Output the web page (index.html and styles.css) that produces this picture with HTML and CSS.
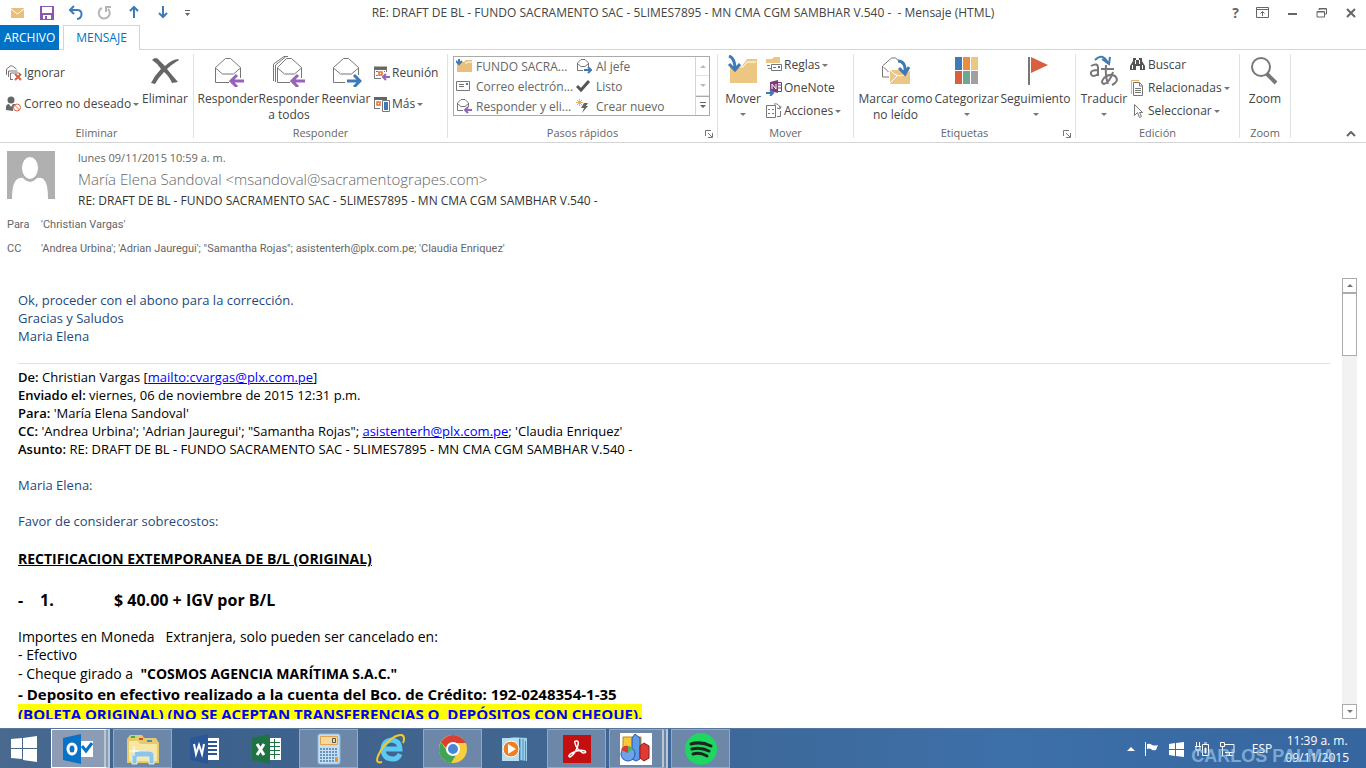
FILE: index.html
```html
<!DOCTYPE html>
<html lang="es">
<head>
    <meta charset="UTF-8">
    <meta name="viewport" content="width=device-width, initial-scale=1.0">
    <title>RE: DRAFT DE BL - Mensaje (HTML)</title>
    <link rel="stylesheet" href="styles.css">
</head>
<body>
    <header class="titlebar">
        <div class="quick">
            <button aria-label="Correo"><svg width="16" height="16"><path fill="#e8bf7d" d="M1 3h13v10H1z"/><path fill="none" stroke="#fff" d="M1 4l6.500 5L14 4"/></svg></button>
            <button aria-label="Guardar"><svg width="16" height="16"><path fill="#8a57b0" fill-rule="evenodd" d="M1 1h14v14H1zM3 2v6h10V2zM4 10v4h2v-3h2v3h4v-4z"/></svg></button>
            <button aria-label="Deshacer"><svg width="16" height="16" fill="none" stroke="#3f7ab8" stroke-width="2"><path d="M6 1L2 5l4 4M2 5h7c6 0 6 8 0 9"/></svg></button>
            <button aria-label="Rehacer"><svg width="16" height="16" fill="none" stroke="#b5b5b5" stroke-width="2"><path d="M5 3a5.500 5.500 0 1 0 6 1M9 7V2h5"/></svg></button>
            <button aria-label="Anterior"><svg width="16" height="16" fill="none" stroke="#3f7ab8" stroke-width="2"><path d="M8 13V2M4 6l4-4 4 4"/></svg></button>
            <button aria-label="Siguiente"><svg width="16" height="16" fill="none" stroke="#3f7ab8" stroke-width="2"><path d="M8 1v11M4 8l4 4 4-4"/></svg></button>
            <button class="more" aria-label="Personalizar"><svg width="7" height="8"><path fill="#666" d="M1 1h5v1H1zM1 4h5L3.500 7z"/></svg></button>
        </div>
        <h1>RE: DRAFT DE BL - FUNDO SACRAMENTO SAC - 5LIMES7895 - MN CMA CGM SAMBHAR V.540 -&nbsp; - Mensaje (HTML)</h1>
        <div class="window-buttons">
            <button class="help" aria-label="Ayuda">?</button>
            <button aria-label="Opciones"><svg width="14" height="12" fill="none" stroke="#666"><path d="M.5.500h12v10H.5zM1 2.500h11M6.500 9V4.500M4.500 6.500l2-2 2 2"/></svg></button>
            <button aria-label="Minimizar"><svg width="12" height="12"><path fill="#666" d="M1 6h9v2H1z"/></svg></button>
            <button aria-label="Restaurar"><svg width="12" height="12" fill="none" stroke="#666"><path d="M3 3V1.500h7.500V7H9M1 4.500h7.500V10H1zM3 2h7M1 5h7"/></svg></button>
            <button aria-label="Cerrar"><svg width="12" height="12" stroke="#666" stroke-width="2"><path d="M2 2l8 8M10 2l-8 8"/></svg></button>
        </div>
    </header>

    <nav class="tabs">
        <button class="file">ARCHIVO</button>
        <button class="active">MENSAJE</button>
    </nav>

    <section class="ribbon">
        <div class="group eliminar">
            <div class="tools">
                <div class="col two">
                    <button class="small"><svg width="16" height="16" fill="none" stroke="#777"><path d="M.5 10V4l4-3h2l4 3M2.500 12V6h9M4.500 14V8h9v2M4 14.500h3"/><path stroke="#d9603f" stroke-width="2" d="M9 9l6 6M15 9l-6 6"/></svg>Ignorar</button>
                    <button class="small"><svg width="16" height="16"><circle cx="5" cy="4" r="3.500" fill="#666"/><path fill="#666" d="M0 14V10q1-2 3-2l2 3 2-3h3q-4 3-3 7z"/><circle cx="11" cy="11.500" r="3.500" fill="#fff" stroke="#d9603f"/><path stroke="#d9603f" d="M8.500 9l5 5"/></svg>Correo no deseado<i class="arrow"></i></button>
                </div>
                <button class="big"><svg width="32" height="32"><path fill="#666" d="M3 5Q7 1 10 5l6 6Q22 5 29 4l1 1Q22 10 18 14q4 5 11 13l-6 1q-3-7-8-11-5 5-9 12l-4-1Q6 20 12 14 8 8 3 5z"/></svg>Eliminar</button>
            </div>
            <h2>Eliminar</h2>
        </div>

        <div class="group responder">
            <div class="tools">
                <button class="big"><svg width="32" height="32" fill="none" stroke="#777"><path d="M17 27.500H3.500v-15l10-9h5l10 9V23M3.500 13l7 6h11l7-6"/><path stroke="#9563b8" stroke-width="3" d="M32 26H19M25 20l-6 6 6 6"/></svg>Responder</button>
                <button class="big"><svg width="32" height="32" fill="none" stroke="#777"><path d="M.5 26V9L11 1.500h4M17 27.500H4.500v-15l9-9h5l10 9V23M4.500 13l7 6h10l7-6M2.500 27V10l10-8"/><path stroke="#9563b8" stroke-width="3" d="M32 26H19M25 20l-6 6 6 6"/></svg>Responder a todos</button>
                <button class="big"><svg width="32" height="32" fill="none" stroke="#777"><path d="M15 27.500H3.500v-15l10-9h5l10 9V20M3.500 13l7 6h11l7-6"/><path stroke="#3f7ab8" stroke-width="3" d="M17 26h13M24 20l6 6-6 6"/></svg>Reenviar</button>
                <div class="col two">
                    <button class="small"><svg width="16" height="16" fill="none" stroke="#777"><path d="M.5 13V4.500h12V7M0 13.500h7M2 6.500h2M2 10.500h2M10.500 6v1"/><path stroke="#666" stroke-width="3" d="M0 3h13"/><path stroke="#e07030" stroke-width="1.500" d="M5 7h3v3H5z"/><path stroke="#9563b8" stroke-width="2" d="M16 12h-6M12 9l-3 3 3 3"/></svg>Reunión</button>
                    <button class="small"><svg width="16" height="16" fill="none" stroke="#777"><path d="M.5 12.500V3M0 12.500h6"/><path stroke="#666" stroke-width="3" d="M0 2.500h13"/><path stroke="#e07030" stroke-width="1.500" d="M3 6h3v3H3z"/><path fill="#fff" d="M8.500 4.500h7v11h-7z"/><path fill="#3f7ab8" stroke="none" d="M10 6h4v8h-4z"/></svg>Más<i class="arrow"></i></button>
                </div>
            </div>
            <h2>Responder</h2>
        </div>

        <div class="group pasos">
            <div class="gallery">
                <div class="steps">
                    <button><svg width="16" height="16"><path fill="#e8bf7d" d="M1 3h7l2-2h6v12H1z"/><path fill="none" stroke="#fff" d="M9 4h2l1-1h4"/><path fill="none" stroke="#3f7ab8" stroke-width="2" d="M3 0v4M0 2l3 3 3-3"/></svg><span>FUNDO SACRA...</span></button>
                    <button><svg width="16" height="16" fill="none" stroke="#777"><path d="M7 11.500H1.500V4L5 .5h4L12.500 4v4M1.500 4.500L5 7.500h4l3.500-3"/><path stroke="#3f7ab8" stroke-width="2" d="M8 11h7M12 8l3 3-3 3"/></svg><span>Al jefe</span></button>
                    <button><svg width="16" height="16" fill="none" stroke="#777"><path d="M.5 2.500h13v9H.5zM3 5.500h5M3 7.500h5"/><path stroke="#3f7ab8" stroke-width="2" d="M10 5h2"/></svg><span>Correo electrón...</span></button>
                    <button><svg width="16" height="16" fill="none" stroke="#555" stroke-width="3"><path d="M1 7l4 4 8-9"/></svg><span>Listo</span></button>
                    <button><svg width="16" height="16" fill="none" stroke="#777"><path d="M7 11.500H1.500V4L5 .5h4L12.500 4v4M1.500 4.500L5 7.500h4l3.500-3"/><path stroke="#9563b8" stroke-width="2" d="M16 11h-6M12 8l-3 3 3 3"/></svg><span>Responder y eli...</span></button>
                    <button><svg width="16" height="16"><path stroke="#e8b06a" d="M3.500 0v7M0 3.500h7M1 1l5 5M6 1L1 6"/><path fill="#666" d="M8 4h4l-2 3h2l-6 7 2-5H5z"/></svg><span>Crear nuevo</span></button>
                </div>
                <div class="spin">
                    <button aria-label="Subir"><i class="arrow up pale"></i></button>
                    <button aria-label="Bajar"><i class="arrow pale"></i></button>
                    <button class="last" aria-label="Más pasos"><svg width="8" height="8"><path fill="#666" d="M1 0h6v1H1zM1 3h6L4 6z"/></svg></button>
                </div>
            </div>
            <h2>Pasos rápidos</h2>
            <button class="launcher" aria-label="Administrar pasos"><svg width="8" height="8" fill="none" stroke="#777"><path d="M.5 6V.5H6M3 3l4 4M7.500 3v4.500H3"/></svg></button>
        </div>

        <div class="group mover">
            <div class="tools">
                <button class="big"><svg width="32" height="32"><path fill="#ecc682" d="M3 11h12l5-7h10v24H3z"/><path fill="none" stroke="#fff" d="M10 12h6l4-5h9"/><path fill="none" stroke="#fff" stroke-width="5" d="M2 1q6 2 6 12"/><path fill="none" stroke="#3f7ab8" stroke-width="3" d="M2 1q6 2 6 13M2 9l6 6 5-6"/></svg>Mover<i class="arrow"></i></button>
                <div class="col three">
                    <button class="small"><svg width="16" height="16"><path fill="#ecc682" d="M0 2h6l2-2h6v6H0z"/><path fill="#fff" stroke="#777" d="M5.500 7.500h10v6h-10z"/><path stroke="#777" d="M1 8.500h3M2 11.500h3M7 10.500h3"/><path fill="#3f7ab8" d="M12 9h2v2h-2z"/></svg>Reglas<i class="arrow"></i></button>
                    <button class="small"><svg width="16" height="16"><path fill="#80397b" d="M4 2l8-2v13l-8-2z"/><path fill="none" stroke="#80397b" d="M12 2.500h3.500v9H12M12 5h3M12 8h3"/><path fill="none" stroke="#fff" d="M6 9V4l4 5V4"/><path fill="none" stroke="#3f7ab8" stroke-width="2" d="M0 13h6M4 10l3 3-3 3"/></svg>OneNote</button>
                    <button class="small"><svg width="16" height="16" fill="none" stroke="#777"><path d="M.5 2.500h9v12h-9zM2 6.500h2M6 6.500h2M2 10.500h2M6 10.500h2M8 1q5-1 6 4M11 5l3 1 1-3M11 13.500h3.500V8"/></svg>Acciones<i class="arrow"></i></button>
                </div>
            </div>
            <h2>Mover</h2>
        </div>

        <div class="group etiquetas">
            <div class="tools">
                <button class="big"><svg width="32" height="32"><path fill="#fff" stroke="#777" d="M9 22H2.500V11l9-8h4l9 8v5M3.500 12l5 5"/><path fill="#ecc682" d="M10 15h20v14H10z"/><path fill="none" stroke="#fff" d="M10 15q10 12 20 0M10 28l7-7"/><path fill="none" stroke="#3f7ab8" stroke-width="3" d="M18 6q8 0 7 12M19 13l6 6 4-7"/></svg>Marcar como no leído</button>
                <button class="big"><svg width="32" height="32"><path fill="#3f7ab8" d="M4 2h7v13H4z"/><path fill="#e88e43" d="M12 2h7v13h-7z"/><path fill="#ecc682" d="M20 2h7v13h-7z"/><path fill="#d9603f" d="M4 16h7v13H4z"/><path fill="#72a594" d="M12 16h7v13h-7z"/><path fill="#a0a0a0" d="M20 16h7v13h-7z"/></svg>Categorizar<i class="arrow"></i></button>
                <button class="big"><svg width="32" height="32"><path fill="#777" d="M8 2h2v28H8z"/><path fill="#d9603f" d="M11 2l17 8-17 8z"/></svg>Seguimiento<i class="arrow"></i></button>
            </div>
            <h2>Etiquetas</h2>
            <button class="launcher" aria-label="Opciones de etiquetas"><svg width="8" height="8" fill="none" stroke="#777"><path d="M.5 6V.5H6M3 3l4 4M7.500 3v4.500H3"/></svg></button>
        </div>

        <div class="group edicion">
            <div class="tools">
                <button class="big"><svg width="32" height="32" fill="none" stroke="#777" stroke-width="2"><path d="M3 11q7-4 7 2v8M10 15q-8 0-7 4t7 0M13 14h13M18 10q-1 11 2 19M25 17q-3 10-9 12-4-1 0-6 5-5 11-2 5 5-3 9"/><path stroke="#3f7ab8" d="M7 5q7-8 13 3M14 4l7 5 1-7"/></svg>Traducir<i class="arrow"></i></button>
                <div class="col three">
                    <button class="small"><svg width="16" height="16"><path fill="#555" d="M3 1h3v2h3V1h3v3l3 5v4h-5V9H6v4H0V9l3-5z"/><path stroke="#fff" d="M2.500 8v4M12.500 8v4M5.500 3v4M9.500 3v4"/></svg>Buscar</button>
                    <button class="small"><svg width="16" height="16" fill="none" stroke="#777"><path stroke="#e8b06a" d="M1.500 14V.5H9"/><path d="M3.500 2.500h6l3 3v10h-9zM9.500 3v3h3M5 8.500h6M5 10.500h6M5 12.500h6"/></svg>Relacionadas<i class="arrow"></i></button>
                    <button class="small"><svg width="16" height="16" fill="none" stroke="#777"><path d="M4.500 1.500v11l3-3 2 5 2-1-2-4h3z"/></svg>Seleccionar<i class="arrow"></i></button>
                </div>
            </div>
            <h2>Edición</h2>
        </div>

        <div class="group zoom">
            <div class="tools">
                <button class="big"><svg width="32" height="32" fill="none" stroke="#777"><circle cx="12" cy="12" r="9" stroke-width="2"/><path stroke-width="4" d="M18 19l9 9"/></svg>Zoom</button>
            </div>
            <h2>Zoom</h2>
        </div>
        <button class="collapse" aria-label="Contraer la cinta"><svg width="10" height="6" fill="none" stroke="#666" stroke-width="2"><path d="M1 5l4-4 4 4"/></svg></button>
    </section>

    <section class="head">
        <div class="sender">
            <svg width="48" height="48"><path fill="#b0b0b0" d="M0 0h48v48H0z"/><ellipse cx="23" cy="17" rx="8" ry="11" fill="#fff"/><path fill="#fff" d="M5 48q0-20 8-21 3-1 4 1 6 6 12 0 2-2 5-1 7 1 7 21z"/></svg>
            <div>
                <p class="date">lunes 09/11/2015 10:59 a. m.</p>
                <p class="from">María Elena Sandoval &lt;msandoval@sacramentograpes.com&gt;</p>
                <p class="subject">RE: DRAFT DE BL - FUNDO SACRAMENTO SAC - 5LIMES7895 - MN CMA CGM SAMBHAR V.540 -</p>
            </div>
        </div>
        <dl class="people">
            <dt>Para</dt>
            <dd>'Christian Vargas'</dd>
            <dt>CC</dt>
            <dd>'Andrea Urbina'; 'Adrian Jauregui'; "Samantha Rojas"; asistenterh@plx.com.pe; 'Claudia Enriquez'</dd>
        </dl>
    </section>

    <main class="reader">
        <article class="mail">
            <div class="blue">
                <p>Ok, proceder con el abono para la corrección.</p>
                <p>Gracias y Saludos</p>
                <p>Maria Elena</p>
            </div>
            <div class="quoted">
                <p><b>De:</b> Christian Vargas [<a href="mailto:cvargas@plx.com.pe">mailto:cvargas@plx.com.pe</a>]</p>
                <p><b>Enviado el:</b> viernes, 06 de noviembre de 2015 12:31 p.m.</p>
                <p><b>Para:</b> 'María Elena Sandoval'</p>
                <p><b>CC:</b> 'Andrea Urbina'; 'Adrian Jauregui'; "Samantha Rojas"; <a href="mailto:asistenterh@plx.com.pe">asistenterh@plx.com.pe</a>; 'Claudia Enriquez'</p>
                <p><b>Asunto:</b> RE: DRAFT DE BL - FUNDO SACRAMENTO SAC - 5LIMES7895 - MN CMA CGM SAMBHAR V.540 -</p>
            </div>
            <div class="blue spaced">
                <p>Maria Elena:</p>
                <p>Favor de considerar sobrecostos:</p>
            </div>
            <div class="costs">
                <h3>RECTIFICACION EXTEMPORANEA DE B/L (ORIGINAL)</h3>
                <p class="amount"><span>-</span><span>1.</span><span>$ 40.00 + IGV por B/L</span></p>
                <p>Importes en Moneda &nbsp; Extranjera, solo pueden ser cancelado en:</p>
                <p>- Efectivo</p>
                <p class="tall">- Cheque girado a &nbsp;<b>"COSMOS AGENCIA MARÍTIMA S.A.C."</b></p>
                <p class="tall strong">- Deposito en efectivo realizado a la cuenta del Bco. de Crédito: 192-0248354-1-35</p>
                <p class="tall"><mark>(BOLETA ORIGINAL) (NO SE ACEPTAN TRANSFERENCIAS O&nbsp; DEPÓSITOS CON CHEQUE).</mark></p>
            </div>
        </article>
        <div class="scroll">
            <button aria-label="Subir"><i class="arrow up"></i></button>
            <div class="thumb"></div>
            <button class="down" aria-label="Bajar"><i class="arrow"></i></button>
        </div>
    </main>

    <footer class="taskbar">
        <button class="start" aria-label="Inicio"><svg width="28" height="28"><path fill="#fff" d="M1 4l11-1v10H1zM13 3l14-2v12H13zM1 14h11v10L1 23zM13 14h14v13l-14-2z"/></svg></button>
        <button class="task current stack" aria-label="Outlook"><svg width="32" height="32"><path fill="#fff" d="M15 8h16v16H15z"/><path fill="#0a72c6" d="M1 5l18-4v30L1 27z"/><path fill="none" stroke="#0a72c6" stroke-width="3" d="M20 13l4 5 6-8"/><ellipse cx="10" cy="16" rx="4" ry="5" fill="none" stroke="#fff" stroke-width="3"/></svg></button>
        <button class="task open" aria-label="Explorador"><svg width="34" height="32"><path fill="#e6ca6c" d="M1 6l3-4h12l2 3h12l3 5v20H1z"/><path fill="#f7e7a3" d="M3 8h9l2 3h17v17H3z"/><path fill="#3bb14a" d="M5 3h4v2H5z"/><path fill="#d64a3a" d="M13 5h4v2h-4z"/><path fill="#3b8fd6" d="M21 7h5v2h-5z"/><path fill="#8ec4e4" stroke="#d8effb" d="M6 31V22q1-4 6-4h10q6 0 6 4v9h-5v-7H11v7z"/><path stroke="#fff" d="M8 13v10M3 18h10"/></svg></button>
        <button class="task" aria-label="Word"><svg width="32" height="32"><path fill="#fff" d="M18 5h12v22H18z"/><path stroke="#2b5797" stroke-width="2" d="M18 9h10M18 13h10M18 17h10M18 21h10"/><path fill="#2b5797" d="M1 5l18-4v30L1 27z"/><path fill="none" stroke="#fff" stroke-width="2" d="M5 11l2 10 3-9 3 9 2-10"/></svg></button>
        <button class="task" aria-label="Excel"><svg width="32" height="32"><path fill="#fff" d="M18 5h12v22H18z"/><path stroke="#1f7244" d="M18 9.500h11M18 13.500h11M18 17.500h11M18 21.500h11M23.500 6v20"/><path fill="#1f7244" d="M1 5l18-4v30L1 27z"/><path stroke="#fff" stroke-width="3" d="M6 11l7 11M13 11L6 22"/></svg></button>
        <button class="task open" aria-label="Calculadora"><svg width="24" height="32"><rect x="1" y="1" width="22" height="30" rx="2" fill="#c5e0f4" stroke="#8fb9dc"/><path fill="#f7d79b" stroke="#e0a44c" d="M3.500 3.500h17v8h-17z"/><path fill="none" stroke="#555" d="M15.500 5.500h3v4h-3z"/><path fill="none" stroke="#6b94bd" stroke-width="2" stroke-dasharray="2 1" d="M3 16h17M3 19h17M3 22h17M3 25h14M3 28h14"/><path fill="#f0932b" d="M18 24h3v5h-3z"/></svg></button>
        <button class="task" aria-label="Internet Explorer"><svg width="32" height="32" fill="none"><path stroke="#5cc8f4" stroke-width="5" d="M8 16h17q0-8-8-9-9 1-9 10 1 9 10 9 5 0 7-5"/><path stroke="#f5c928" stroke-width="2" d="M7 29q-7 2-4-6Q8 11 19 4q10-5 10 2 0 2-1 4"/></svg></button>
        <button class="task open" aria-label="Chrome"><svg width="32" height="32"><circle cx="16" cy="16" r="14" fill="#f7ce3e"/><path fill="#d93f35" d="M4 9q5-7 12-7 8 0 13 8H16q-5 1-6 6z"/><path fill="#3da554" d="M4 9l7 11q3 3 8 2l-5 8Q4 28 2 18q0-5 2-9z"/><circle cx="16" cy="16" r="6" fill="#4a86d8" stroke="#fff" stroke-width="2"/></svg></button>
        <button class="task" aria-label="Reproductor"><svg width="32" height="32"><path fill="#9fd2ef" d="M10 4l18 1v23l-7-1V6z"/><path stroke="#4b8fbe" d="M24 6v22M21 6v22M26.500 8v20"/><path fill="#b8def3" d="M3 5h17v23H3z"/><circle cx="12" cy="16" r="8" fill="#ef8022" stroke="#fff"/><path fill="#fff" d="M9 11l8 5-8 5z"/></svg></button>
        <button class="task open" aria-label="Adobe Reader"><svg width="28" height="28"><path fill="#c40f10" d="M0 0h28v28H0z"/><path fill="none" stroke="#fff" stroke-width="1.500" d="M13 6q4-1 1 7-3 7-7 9-3-1 2-4 7-4 13-2 2 2-2 2-7-4-8-10-1-2 1-2z"/></svg></button>
        <button class="task open stack" aria-label="Gráficos"><svg width="32" height="32"><path fill="#fff" d="M0 0h32v32H0z"/><path fill="#f8c93a" stroke="#b98710" d="M3 4h18v18H3z"/><path fill="#5c9be8" stroke="#2456a8" d="M12 5l3-4 5 4v21l-4 2-4-2z"/><path fill="#e03a35" stroke="#961818" d="M20 13l4-3 5 3v12l-5 3-4-3z"/><ellipse cx="8" cy="21" rx="7" ry="7" fill="#6da2ee" stroke="#2456a8"/><path fill="#e03a35" d="M8 20l-7-3q2-5 7-4z"/><path fill="#4cb750" d="M8 20v-7l5 2z"/></svg></button>
        <button class="task open" aria-label="Spotify"><svg width="32" height="32"><circle cx="16" cy="16" r="16" fill="#1ed760"/><path fill="none" stroke="#17251c" stroke-width="3" stroke-linecap="round" d="M6 11q10-3 20 2M7 16q9-2 17 2M8 21q7-2 14 2"/></svg></button>

        <div class="tray">
            <button aria-label="Iconos ocultos"><svg width="8" height="6"><path fill="#fff" d="M0 5l4-4 4 4z"/></svg></button>
            <button aria-label="Centro de actividades"><svg width="16" height="16"><path fill="#fff" d="M1 1h1v14H1zM3 3q3-1 5 1 3 1 6 0l-2 5q-4 1-5-1-2-1-4 0z"/></svg></button>
            <button aria-label="Windows"><svg width="16" height="16"><path fill="#fff" d="M0 3l6-1v6H0zM7 2l8-1v7H7zM0 9h6v6l-6-1zM7 9h8v7l-8-1z"/></svg></button>
            <button aria-label="Batería"><svg width="16" height="16" fill="none" stroke="#fff"><path d="M2.500 1v4M5.500 1v4M1 5.500h6M2 6v3h4V6M4 9v6M8.500 3.500h6v11h-6zM10 2h3"/><path fill="#fff" d="M11 7h1v5h-1z"/></svg></button>
            <button aria-label="Red"><svg width="16" height="16" fill="none" stroke="#fff"><path d="M6 3.500h9v8H6M3.500 6v9M7 14.500h7M10.500 12v2M1.500 1.500h4v4h-4z"/></svg></button>
            <button class="lang">ESP</button>
            <time class="clock" datetime="2015-11-09T11:39"><span>11:39 a. m.</span><span>09/11/2015</span></time>
        </div>
        <span class="owner">CARLOS PALMA</span>
    </footer>
</body>
</html>
```
FILE: styles.css
```css
* {
    box-sizing: border-box;
}

body {
    display: flex;
    flex-direction: column;
    height: 100vh;
    margin: 0;
    overflow: hidden;
    background: #fff;
    color: #444;
    font-family: "Open Sans", "Noto Sans", sans-serif;
    font-size: 12px;
    line-height: 16px;
}

p, h1, h2, h3, dl, dd {
    margin: 0;
}

button {
    padding: 0;
    border: 0;
    background: none;
    color: inherit;
    font: inherit;
}

svg {
    display: block;
    flex: none;
}

.arrow {
    display: inline-block;
    flex: none;
    border: 3px solid transparent;
    border-top-color: #777;
    border-bottom: 0;
}

.arrow.up {
    border-top: 0;
    border-bottom: 3px solid #777;
}

.arrow.pale {
    opacity: 0.5;
}

/* title bar */
.titlebar {
    display: grid;
    grid-template-columns: 1fr auto 1fr;
    align-items: center;
    height: 25px;
    flex: none;
}

.titlebar h1 {
    font-size: 12px;
    font-weight: 400;
}

.quick {
    display: flex;
    align-items: center;
    gap: 13px;
    padding-left: 10px;
}

.window-buttons {
    display: flex;
    align-items: center;
    justify-content: flex-end;
    gap: 17px;
    padding-right: 9px;
}

.help {
    color: #666;
    font-size: 14px;
    font-weight: 700;
}

/* tabs */
.tabs {
    display: flex;
    gap: 4px;
    height: 25px;
    flex: none;
    box-shadow: inset 0 -1px #d4d4d4;
}

.tabs button {
    padding: 0 12px;
    color: #0072c6;
}

.tabs .file {
    padding: 0 4px;
    background: #0072c6;
    color: #fff;
}

.tabs .active {
    border: 1px solid #d4d4d4;
    border-bottom: 0;
    background: #fff;
}

/* ribbon */
.ribbon {
    display: flex;
    flex: none;
    padding: 4px 0;
    border-bottom: 1px solid #d4d4d4;
}

.group {
    position: relative;
    display: flex;
    flex-direction: column;
    height: 84px;
    border-right: 1px solid #e1e1e1;
}

.group h2 {
    margin-top: auto;
    color: #666;
    font-size: 11px;
    font-weight: 400;
    line-height: 10px;
    text-align: center;
}

.tools {
    display: grid;
    height: 70px;
    padding-left: 4px;
}

.eliminar { width: 194px; }
.responder { width: 254px; }
.pasos { width: 270px; }
.mover { width: 136px; }
.etiquetas { width: 222px; }
.edicion { width: 164px; }
.zoom { width: 51px; }

.eliminar .tools { grid-template-columns: 135px 52px; }
.responder .tools { grid-template-columns: 60px 62px 52px 1fr; }
.mover .tools { grid-template-columns: 42px 1fr; }
.etiquetas .tools { grid-template-columns: 75px 67px 71px; }
.edicion .tools { grid-template-columns: 48px 1fr; }
.zoom .tools { padding: 0; }

.big {
    display: flex;
    flex-direction: column;
    align-items: center;
    align-self: start;
    padding-top: 1px;
}

.big svg {
    margin-bottom: 4px;
}

.big .arrow {
    margin-top: 6px;
}

.col {
    display: flex;
    flex-direction: column;
    padding-left: 2px;
}

.two {
    gap: 15px;
    padding-top: 11px;
}

.three {
    gap: 7px;
    padding-top: 3px;
}

.small {
    display: flex;
    align-items: center;
    gap: 2px;
    height: 16px;
    white-space: nowrap;
}

.gallery {
    display: flex;
    height: 60px;
    margin: 2px 7px 0 5px;
    border: 1px solid #ababab;
}

.steps {
    display: grid;
    flex: 1;
    grid-template-columns: 120px 1fr;
    grid-auto-rows: 20px;
    padding-left: 2px;
    overflow: hidden;
}

.steps button {
    display: flex;
    align-items: center;
    gap: 4px;
    color: #666;
    white-space: nowrap;
}

.spin {
    display: grid;
    width: 14px;
    grid-template-rows: 1fr 1fr 1fr;
    border-left: 1px solid #d4d4d4;
}

.spin button {
    display: grid;
    place-items: center;
    border-bottom: 1px solid #e1e1e1;
}

.spin .last {
    border: 1px solid #ababab;
    border-width: 1px 0 0;
}

.launcher {
    position: absolute;
    right: 4px;
    bottom: 0;
}

.collapse {
    align-self: flex-end;
    margin: 0 10px 1px auto;
}

/* message header */
.head {
    flex: none;
    padding: 8px 7px 0;
    color: #666;
}

.sender {
    display: flex;
    gap: 23px;
}

.date {
    font-size: 11px;
    line-height: 14px;
}

.from {
    font-size: 15px;
    font-weight: 300;
    line-height: 28px;
}

.subject {
    color: #333;
    line-height: 16px;
}

.people {
    display: grid;
    grid-template-columns: 34px 1fr;
    row-gap: 8px;
    padding-top: 8px;
    font-family: Roboto, sans-serif;
    font-size: 11px;
}

/* message body */
.reader {
    display: flex;
    flex: 1;
    min-height: 0;
    margin: 21px 9px 9px 18px;
    color: #000;
    font-size: 13px;
    line-height: 18px;
}

.mail {
    flex: 1;
    min-width: 0;
    padding-top: 13px;
    overflow: hidden;
}

.mail a {
    color: #00f;
}

.blue {
    color: #1f497d;
}

.quoted {
    margin: 18px 12px 18px 0;
    padding-top: 4px;
    border-top: 1px solid #e1e1e1;
}

.quoted b {
    font-weight: 600;
}

.spaced p {
    margin-bottom: 18px;
}

.costs {
    font-size: 14px;
}

.costs h3 {
    font-size: 14px;
    line-height: 22px;
    text-decoration: underline;
}

.amount {
    display: grid;
    grid-template-columns: 22px 74px 1fr;
    margin: 20px 0 18px;
    font-size: 16px;
    font-weight: 700;
    line-height: 20px;
}

.costs .tall {
    line-height: 20px;
}

.costs .strong,
mark {
    font-size: 15px;
    font-weight: 700;
}

mark {
    background: #ff0;
    color: #00f;
}

.scroll {
    display: flex;
    flex-direction: column;
    width: 15px;
    background: #f2f2f2;
}

.scroll button {
    display: grid;
    place-items: center;
    height: 15px;
    border: 1px solid #ababab;
    background: #fff;
}

.scroll .down {
    margin-top: auto;
}

.thumb {
    height: 63px;
    border: 1px solid #ababab;
    background: #fff;
}

/* taskbar */
.taskbar {
    position: relative;
    display: flex;
    flex: none;
    gap: 3px;
    height: 40px;
    border-top: 1px solid #56779d;
    background: linear-gradient(90deg, #4a698f 0, #3c618c 180px, #41658f 480px, #3d6898 700px, #3d6fa8 1000px, #3666a0 100%);
    color: #fff;
}

.start,
.task {
    display: grid;
    place-items: center;
}

.start {
    width: 48px;
}

.task {
    width: 59px;
    border: 1px solid transparent;
}

.open {
    border-color: #93a9c2;
    background: #6c87a8;
}

.current {
    border-color: #fff;
    background: #8b9cb4;
}

.stack {
    border-right: 6px double #b8c6d6;
}

.tray {
    display: flex;
    align-items: center;
    gap: 9px;
    margin-left: auto;
    padding-right: 17px;
}

.lang {
    margin: 0 4px 0 8px;
}

.clock {
    display: grid;
    line-height: 17px;
    text-align: center;
    white-space: nowrap;
}

.owner {
    position: absolute;
    right: 31px;
    bottom: 2px;
    color: #a8d4f0;
    font: 700 18px/20px "Liberation Sans", sans-serif;
    opacity: 0.6;
}
```
